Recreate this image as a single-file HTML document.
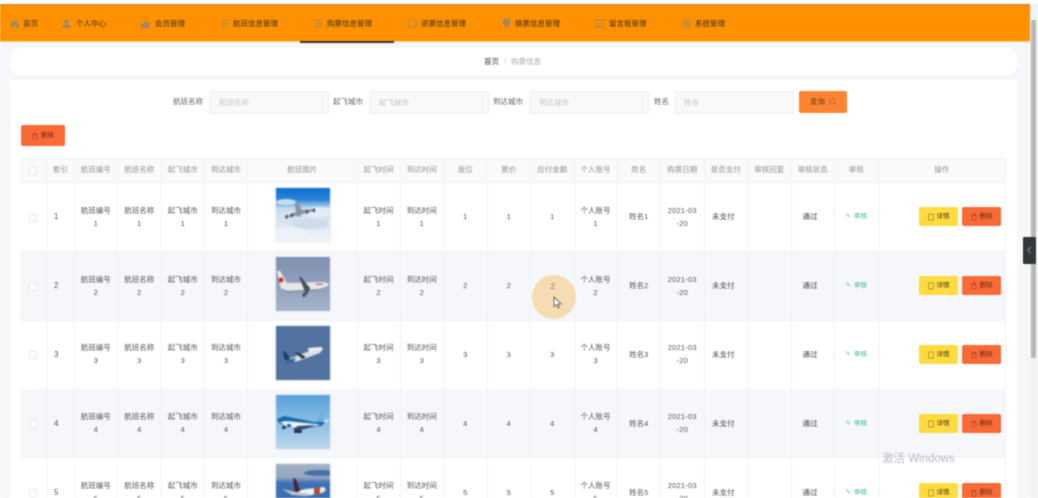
<!DOCTYPE html>
<html lang="zh"><head><meta charset="utf-8"><title>购票信息</title>
<style>
html,body{margin:0;padding:0;width:1038px;height:498px;overflow:hidden;background:#fff}
#w{position:absolute;left:0;top:0;width:1038px;height:498px;overflow:hidden;filter:blur(.55px);font-family:"Liberation Sans","Noto Sans CJK SC",sans-serif;font-size:7.5px;color:#545659;background:#f5f7fa}
.a{position:absolute;white-space:nowrap}
.nt{position:absolute;top:18px;line-height:12px;color:#3f3320;white-space:nowrap}
.ni{position:absolute;top:19px;width:9px;height:9px;fill:none;stroke:#a08a66;stroke-width:1.1}
.nc{position:absolute;top:21px;width:5px;height:4px;fill:none;stroke:#d8a050;stroke-width:.7}
.lb{position:absolute;top:96px;line-height:12px;color:#606266;white-space:nowrap}
.in{position:absolute;top:91px;height:21px;line-height:21px;background:#f9f9f9;border:1px solid #eeeeee;border-radius:2px;color:#c4c6cc;text-indent:8px;box-sizing:content-box}
.r{position:absolute;left:20px;width:986px;display:grid;grid-template-columns:27px 27.5px 43.5px 43.5px 43.5px 43px 109.5px 43px 43.5px 43.5px 43.5px 43.5px 43px 43.5px 43.5px 43.5px 43.5px 43.5px 43.5px 127.5px;border-bottom:1px solid #f0f2f6;box-sizing:border-box}
.r>div{display:flex;align-items:center;justify-content:center;text-align:center;line-height:12.6px;border-right:1px solid #f3f4f7;box-sizing:border-box;min-width:0}
.h{top:158px;height:25px;background:#fafafa;border-top:1px solid #f0f2f6;color:#909399}
.h>div{padding-top:0}
.b{height:69px;background:#fff}
.b>div{padding-top:1px}
.e{background:#f5f7fa}
.cb{width:8px;height:8px;box-sizing:border-box;border:1px solid #e6e8ec;border-radius:1px;background:#fff}
.r>div.l{justify-content:flex-start;padding-left:7px;font-size:8px}
.r>div.s{justify-content:flex-start;padding-left:11px;color:#3c3c3c}
.r>div.n{justify-content:flex-start;padding-left:7.5px;color:#4a4a4a}
.d{letter-spacing:.2px}
.au{color:#3fb8a0;font-size:6.5px}
.au span{margin-right:3px;opacity:.8}
.btn{position:absolute;height:19px;width:39px;border-radius:2px;line-height:19px;color:#4a3a20;text-align:left;box-sizing:border-box;padding-left:17.5px;font-size:6.5px}
.y{background:#ffdb3f}
.o{background:#f96a37;color:#6a2a14}
.btn svg{position:absolute;left:9px;top:5.5px;width:6px;height:8px;fill:none;stroke:currentColor;stroke-width:.7;opacity:.65}
.img{position:absolute;left:276px;width:54px;height:54px;outline:1px solid #eef1f6;filter:blur(.5px)}
</style></head><body><div id="w">

<div class="a" style="left:0;top:0;width:1038px;height:4px;background:#fff"></div>
<div class="a" style="left:0;top:4px;width:1030px;height:38px;background:#ff9000;border-top:1px solid #b8864a;box-sizing:border-box;border-bottom:1px solid #f8c880"></div>
<div class="a" style="left:300px;top:41px;width:94px;height:1.5px;background:#3a3040"></div>

<svg class="ni" style="left:10px" viewBox="0 0 10 10"><path d="M0 5.5 5 1l5 4.5V10H6.500V7h-3v3H1V5.500z" fill="#a08a66" stroke="none"/></svg><div class="nt" style="left:23px">首页</div>
<svg class="ni" style="left:62px" viewBox="0 0 10 10"><circle cx="5" cy="3" r="2.600" fill="#a08a66" stroke="none"/><path d="M0 10c0-3 2-4 5-4s5 1 5 4z" fill="#a08a66" stroke="none"/></svg><div class="nt" style="left:76px">个人中心</div><svg class="nc" style="left:111px" viewBox="0 0 5 4"><path d="M0 .5 2.500 3 5 .5"/></svg>
<svg class="ni" style="left:141px" viewBox="0 0 10 10"><path d="M0 5h3v5H0zM3 5l3-4 1 1-1 2h4v3L8 10H3z" fill="#a08a66" stroke="none"/></svg><div class="nt" style="left:155px">会员管理</div><svg class="nc" style="left:190px" viewBox="0 0 5 4"><path d="M0 .5 2.500 3 5 .5"/></svg>
<svg class="ni" style="left:220px" viewBox="0 0 10 10"><path d="M1 1.500h8M1 5h8M1 8.500h8"/></svg><div class="nt" style="left:233px">航班信息管理</div><svg class="nc" style="left:284px" viewBox="0 0 5 4"><path d="M0 .5 2.500 3 5 .5"/></svg>
<svg class="ni" style="left:314px" viewBox="0 0 10 10"><path d="M1 1.500h8M1 5h8M1 8.500h8"/></svg><div class="nt" style="left:327px">购票信息管理</div><svg class="nc" style="left:378px" viewBox="0 0 5 4"><path d="M0 .5 2.500 3 5 .5"/></svg>
<svg class="ni" style="left:408px" viewBox="0 0 10 10"><rect x=".7" y=".7" width="8.600" height="8.600" rx="2.500"/></svg><div class="nt" style="left:421px">退票信息管理</div><svg class="nc" style="left:472px" viewBox="0 0 5 4"><path d="M0 .5 2.500 3 5 .5"/></svg>
<svg class="ni" style="left:502px" viewBox="0 0 10 10"><path d="M1 0h8v5L5 10 1 5z" fill="#a08a66" stroke="none"/></svg><div class="nt" style="left:515px">换票信息管理</div><svg class="nc" style="left:566px" viewBox="0 0 5 4"><path d="M0 .5 2.500 3 5 .5"/></svg>
<svg class="ni" style="left:595px" viewBox="0 0 10 10"><rect x=".6" y="1" width="8.800" height="8"/><path d="M4 6.500 6 4"/></svg><div class="nt" style="left:609px">留言板管理</div><svg class="nc" style="left:652px" viewBox="0 0 5 4"><path d="M0 .5 2.500 3 5 .5"/></svg>
<svg class="ni" style="left:682px" viewBox="0 0 10 10"><circle cx="5" cy="5" r="4.200"/><circle cx="5" cy="5" r="1.500"/></svg><div class="nt" style="left:695px">系统管理</div><svg class="nc" style="left:731px" viewBox="0 0 5 4"><path d="M0 .5 2.500 3 5 .5"/></svg>

<div class="a" style="left:10px;top:48px;width:1007px;height:27px;background:#fff;border-radius:10px"></div>
<div class="a" style="left:484px;top:56px;line-height:12px;color:#3f3f3f">首页<span style="color:#c0c4cc;margin:0 5px">/</span><span style="color:#a8abb2">购票信息</span></div>

<div class="a" style="left:10px;top:80px;width:1007px;height:418px;background:#fff"></div>

<div class="lb" style="left:173px">航班名称</div><div class="in" style="left:210px;width:117px">航班名称</div>
<div class="lb" style="left:333px">起飞城市</div><div class="in" style="left:370px;width:117px">起飞城市</div>
<div class="lb" style="left:493px">到达城市</div><div class="in" style="left:530px;width:117px">到达城市</div>
<div class="lb" style="left:654px">姓名</div><div class="in" style="left:675px;width:117px">姓名</div>
<div class="a" style="left:799px;top:91px;width:48px;height:22px;background:#ff8431;border-radius:2px;line-height:22px;color:#6b3d18;text-indent:11px">查询<svg style="position:absolute;left:30px;top:7px;width:7px;height:7px;fill:none;stroke:#8a5a30;stroke-width:.7" viewBox="0 0 8 8"><circle cx="3.800" cy="3.800" r="3"/><path d="M6 6l1.500 1.500"/></svg></div>

<div class="a btn o" style="left:21px;top:125px;width:44px;height:21px;line-height:21px;padding-left:20px"><svg style="left:10.500px;top:6.500px" viewBox="0 0 7 8"><path d="M.5 2h6M2.300 2V.7h2.400V2M1.200 2v5.500h4.600V2"/></svg>删除</div>

<div class="r h"><div><span class="cb"></span></div><div>索引</div><div>航班编号</div><div>航班名称</div><div>起飞城市</div><div>到达城市</div><div>航班图片</div><div>起飞时间</div><div>到达时间</div><div>座位</div><div>票价</div><div>应付金额</div><div>个人账号</div><div>姓名</div><div>购票日期</div><div>是否支付</div><div>审核回复</div><div>审核状态</div><div>审核</div><div>操作</div></div>

<div class="r b" style="top:183px"><div><span class="cb"></span></div><div class="l">1</div><div>航班编号<br>1</div><div>航班名称<br>1</div><div>起飞城市<br>1</div><div>到达城市<br>1</div><div></div><div>起飞时间<br>1</div><div>到达时间<br>1</div><div>1</div><div>1</div><div>1</div><div>个人账号<br>1</div><div>姓名1</div><div class="d">2021-03<br>-20</div><div class="n">未支付</div><div></div><div class="s">通过</div><div class="au"><span>✎</span>审核</div><div></div></div>

<div class="r b e" style="top:252px"><div><span class="cb"></span></div><div class="l">2</div><div>航班编号<br>2</div><div>航班名称<br>2</div><div>起飞城市<br>2</div><div>到达城市<br>2</div><div></div><div>起飞时间<br>2</div><div>到达时间<br>2</div><div>2</div><div>2</div><div></div><div>个人账号<br>2</div><div>姓名2</div><div class="d">2021-03<br>-20</div><div class="n">未支付</div><div></div><div class="s">通过</div><div class="au"><span>✎</span>审核</div><div></div></div>

<div class="r b" style="top:320.500px"><div><span class="cb"></span></div><div class="l">3</div><div>航班编号<br>3</div><div>航班名称<br>3</div><div>起飞城市<br>3</div><div>到达城市<br>3</div><div></div><div>起飞时间<br>3</div><div>到达时间<br>3</div><div>3</div><div>3</div><div>3</div><div>个人账号<br>3</div><div>姓名3</div><div class="d">2021-03<br>-20</div><div class="n">未支付</div><div></div><div class="s">通过</div><div class="au"><span>✎</span>审核</div><div></div></div>

<div class="r b e" style="top:389.400px"><div><span class="cb"></span></div><div class="l">4</div><div>航班编号<br>4</div><div>航班名称<br>4</div><div>起飞城市<br>4</div><div>到达城市<br>4</div><div></div><div>起飞时间<br>4</div><div>到达时间<br>4</div><div>4</div><div>4</div><div>4</div><div>个人账号<br>4</div><div>姓名4</div><div class="d">2021-03<br>-20</div><div class="n">未支付</div><div></div><div class="s">通过</div><div class="au"><span>✎</span>审核</div><div></div></div>

<div class="r b" style="top:458.300px"><div><span class="cb"></span></div><div class="l">5</div><div>航班编号<br>5</div><div>航班名称<br>5</div><div>起飞城市<br>5</div><div>到达城市<br>5</div><div></div><div>起飞时间<br>5</div><div>到达时间<br>5</div><div>5</div><div>5</div><div>5</div><div>个人账号<br>5</div><div>姓名5</div><div class="d">2021-03<br>-20</div><div class="n">未支付</div><div></div><div class="s">通过</div><div class="au"><span>✎</span>审核</div><div></div></div>

<div class="a btn y" style="left:919px;top:207px"><svg viewBox="0 0 7 8"><rect x=".7" y=".5" width="5.600" height="7"/></svg>详情</div><div class="a btn o" style="left:962px;top:207px"><svg viewBox="0 0 7 8"><path d="M.5 2h6M2.300 2V.7h2.400V2M1.200 2v5.500h4.600V2"/></svg>删除</div>
<div class="a btn y" style="left:919px;top:276px"><svg viewBox="0 0 7 8"><rect x=".7" y=".5" width="5.600" height="7"/></svg>详情</div><div class="a btn o" style="left:962px;top:276px"><svg viewBox="0 0 7 8"><path d="M.5 2h6M2.300 2V.7h2.400V2M1.200 2v5.500h4.600V2"/></svg>删除</div>
<div class="a btn y" style="left:919px;top:345px"><svg viewBox="0 0 7 8"><rect x=".7" y=".5" width="5.600" height="7"/></svg>详情</div><div class="a btn o" style="left:962px;top:345px"><svg viewBox="0 0 7 8"><path d="M.5 2h6M2.300 2V.7h2.400V2M1.200 2v5.500h4.600V2"/></svg>删除</div>
<div class="a btn y" style="left:919px;top:414px"><svg viewBox="0 0 7 8"><rect x=".7" y=".5" width="5.600" height="7"/></svg>详情</div><div class="a btn o" style="left:962px;top:414px"><svg viewBox="0 0 7 8"><path d="M.5 2h6M2.300 2V.7h2.400V2M1.200 2v5.500h4.600V2"/></svg>删除</div>
<div class="a btn y" style="left:919px;top:483px"><svg viewBox="0 0 7 8"><rect x=".7" y=".5" width="5.600" height="7"/></svg>详情</div><div class="a btn o" style="left:962px;top:483px"><svg viewBox="0 0 7 8"><path d="M.5 2h6M2.300 2V.7h2.400V2M1.200 2v5.500h4.600V2"/></svg>删除</div>

<svg class="img" style="top:188px" viewBox="0 0 54 54"><defs><linearGradient id="g1" x1="0" y1="0" x2="0" y2="1"><stop offset="0" stop-color="#0a6cd0"/><stop offset=".22" stop-color="#2f86d8"/><stop offset=".38" stop-color="#c8dcee"/><stop offset="1" stop-color="#f2f5f8"/></linearGradient></defs><rect width="54" height="54" fill="url(#g1)"/><ellipse cx="10" cy="14" rx="10" ry="3" fill="#c4dcf0"/><ellipse cx="42" cy="24" rx="16" ry="5" fill="#e4edf5"/><ellipse cx="18" cy="30" rx="16" ry="7" fill="#d6e3ef"/><ellipse cx="34" cy="36" rx="18" ry="5" fill="#cddcea"/><ellipse cx="14" cy="46" rx="18" ry="6" fill="#eef2f6"/><path d="M9 29 20 24 19 17 21 14.500 24 17 25 22 39 21 39 23 26 26 23 29 20 27.500 10 30z" fill="#8a929c"/><rect x="9.500" y="27" width="2" height="3.500" fill="#3f4650"/><rect x="15" y="25.500" width="2" height="3.500" fill="#3f4650"/><rect x="30" y="22" width="2" height="3.500" fill="#3f4650"/><rect x="37" y="20.500" width="2" height="3.500" fill="#3f4650"/></svg>

<svg class="img" style="top:257px" viewBox="0 0 54 54"><defs><linearGradient id="g2" x1="0" y1="0" x2="0" y2="1"><stop offset="0" stop-color="#7e8fb0"/><stop offset="1" stop-color="#a4b2ca"/></linearGradient></defs><rect width="54" height="54" fill="url(#g2)"/><path d="M1 14 4 14 11 26 48 25 53 27 52 29 44 32 12 34 5 32z" fill="#e6e8ea"/><path d="M4 31 12 34 44 32 52 29 45 33 12 36z" fill="#8a8f94"/><path d="M1 14 4 14 9 25 5 28z" fill="#e8e8ea"/><circle cx="5" cy="23" r="2.500" fill="#c8342c"/><path d="M23 20 25 20 34 31 32 36 30 39 28 32z" fill="#4a4f56"/><rect x="27" y="36" width="2" height="4" fill="#33363a"/><rect x="40" y="26.500" width="7" height="1.300" fill="#b45a60"/></svg>

<svg class="img" style="top:326px" viewBox="0 0 54 54"><rect width="54" height="54" fill="#52739f"/><path d="M8 34 18 31 44 21 47 23 44 27 22 35 9 37z" fill="#dde0e4"/><path d="M7 25 10 26 14 33 18 36 9 37z" fill="#243a66"/><path d="M9 34 20 32 17 37 9 38z" fill="#3a6aa0"/><path d="M18 25 21 26 30 31 26 33z" fill="#2e3442"/><path d="M32 22 46 21 46 23 33 26z" fill="#f0f0f0"/></svg>

<svg class="img" style="top:395px" viewBox="0 0 54 54"><defs><linearGradient id="g4" x1="0" y1="0" x2="0" y2="1"><stop offset="0" stop-color="#58a2dc"/><stop offset=".6" stop-color="#95c3e6"/><stop offset="1" stop-color="#bcd7ea"/></linearGradient></defs><rect width="54" height="54" fill="url(#g4)"/><path d="M1 24 8 21 18 23 38 27 50 27 45 31 26 34 10 31 3 28z" fill="#1668b0"/><path d="M4 27 10 26 40 29 44 30 26 34 10 31z" fill="#eef3f6"/><path d="M40 27 46 15 48 16 47 27z" fill="#6fb0e0"/><path d="M47 26 54 24 50 28z" fill="#dfe8f0"/><path d="M17 34 22 31 40 30 32 33 20 36z" fill="#2a4a70"/><rect x="6" y="31" width="4" height="3" rx="1" fill="#233a5c"/><rect x="18" y="35" width="8" height="3" rx="1" fill="#2b3240"/><rect x="11" y="29" width="4" height="3" rx="1" fill="#1a5ea8"/></svg>

<svg class="img" style="top:464px" viewBox="0 0 54 54"><defs><linearGradient id="g5" x1="0" y1="0" x2="0" y2="1"><stop offset="0" stop-color="#a4b0c4"/><stop offset=".25" stop-color="#95a6c2"/><stop offset=".35" stop-color="#3f70b4"/><stop offset="1" stop-color="#3a6cb0"/></linearGradient></defs><rect width="54" height="54" fill="url(#g5)"/><ellipse cx="44" cy="9" rx="16" ry="3" fill="#4a6ea8"/><path d="M16 28 30 25 48 23 50 26 46 29 30 32 20 31z" fill="#eef0f2"/><path d="M17 14 20 15 24 27 19 29z" fill="#4a2430"/><path d="M6 25 20 28 34 30 30 32 16 31z" fill="#bcc4cc"/><path d="M38 24 44 23 44 30 38 31z" fill="#b04a3c"/></svg>

<div class="a" style="left:531.500px;top:275px;width:44px;height:44px;border-radius:50%;background:#f6dcb2"></div>
<div class="a" style="left:550.500px;top:281px;line-height:12px;color:#8f7350;font-size:8px">2</div>
<svg class="a" style="left:553px;top:296px;width:9px;height:13px" viewBox="0 0 9 13"><path d="M1 1V10.500L3.300 8.500 5 12 6.500 11.300 5 8H8z" fill="#fff" stroke="#555" stroke-width=".8"/></svg>

<div class="a" style="left:882px;top:451px;font-size:11.500px;line-height:16px;color:#b9bbbf">激活 Windows</div>

<div class="a" style="left:1030px;top:4px;width:8px;height:494px;background:#f3f3f3"></div>
<div class="a" style="left:1030.500px;top:20px;width:5.500px;height:338px;background:#b8b8b8"></div>
<div class="a" style="left:1023px;top:237px;width:13px;height:27px;background:#34373a;border-radius:1px"></div>
<svg class="a" style="left:1027px;top:246px;width:5px;height:8px;fill:none;stroke:#9a9da0;stroke-width:.9" viewBox="0 0 5 8"><path d="M3.800 .8.800 4l3 3.200"/></svg>
</div></body></html>
